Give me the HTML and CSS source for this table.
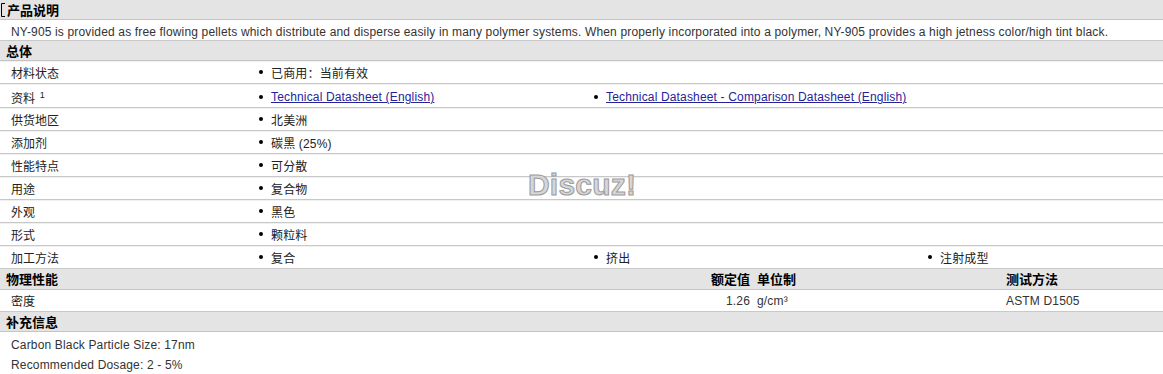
FILE: index.html
```html
<!DOCTYPE html>
<html lang="zh">
<head>
<meta charset="utf-8">
<title>NY-905</title>
<link rel="stylesheet" href="styles.css">
</head>
<body>
<div class="sheet">
  <div class="head head-first"><svg class="cursor" width="6" height="16" viewBox="0 0 6 16"><path d="M5 1.5H1.5V14.5H5" fill="none" stroke="#000" stroke-width="1"/></svg>产品说明</div>
  <div class="desc">NY-905 is provided as free flowing pellets which distribute and disperse easily in many polymer systems. When properly incorporated into a polymer, NY-905 provides a high jetness color/high tint black.</div>

  <div class="head">总体</div>
  <div class="row"><div class="label">材料状态</div><div class="val"><span class="dot"></span>已商用：当前有效</div></div>
  <div class="row row-low"><div class="label">资料 <sup class="sup">1</sup></div><div class="val"><span class="dot"></span><a href="#" class="link">Technical Datasheet (English)</a></div><div class="val"><span class="dot"></span><a href="#" class="link">Technical Datasheet - Comparison Datasheet (English)</a></div></div>
  <div class="row"><div class="label">供货地区</div><div class="val"><span class="dot"></span>北美洲</div></div>
  <div class="row"><div class="label">添加剂</div><div class="val"><span class="dot"></span>碳黑 (25%)</div></div>
  <div class="row"><div class="label">性能特点</div><div class="val"><span class="dot"></span>可分散</div></div>
  <div class="row"><div class="label">用途</div><div class="val"><span class="dot"></span>复合物</div></div>
  <div class="row"><div class="label">外观</div><div class="val"><span class="dot"></span>黑色</div></div>
  <div class="row"><div class="label">形式</div><div class="val"><span class="dot"></span>颗粒料</div></div>
  <div class="row row-last"><div class="label">加工方法</div><div class="val"><span class="dot"></span>复合</div><div class="val"><span class="dot"></span>挤出</div><div class="val"><span class="dot"></span>注射成型</div></div>

  <div class="head phys"><div>物理性能</div><div class="num">额定值</div><div class="unit">单位制</div><div class="test">测试方法</div></div>
  <div class="prow"><div class="label">密度</div><div class="num">1.26</div><div class="unit">g/cm³</div><div class="test">ASTM D1505</div></div>

  <div class="head">补充信息</div>
  <div class="notes">
    <p>Carbon Black Particle Size: 17nm</p>
    <p>Recommended Dosage: 2 - 5%</p>
  </div>

  <div class="watermark">Discuz!</div>
</div>
</body>
</html>
```

FILE: styles.css
```css
html, body {
  margin: 0;
  padding: 0;
  background: #fff;
}
body {
  font-family: "Liberation Sans", "Noto Sans CJK SC", sans-serif;
  font-size: 12px;
  color: #222;
  letter-spacing: 0.16px;
}
.sheet {
  position: relative;
  width: 1163px;
  height: 374px;
  overflow: hidden;
}
.head {
  height: 19px;
  line-height: 19px;
  background: #e4e4e4;
  border-top: 1px solid #c9c9c9;
  border-bottom: 1px solid #c4c4c4;
  font-family: "Noto Sans CJK SC", sans-serif;
  font-weight: 700;
  font-size: 13px;
  color: #000;
  padding-left: 6px;
  display: flex;
  align-items: center;
  letter-spacing: 0;
}
.head-first {
  border-top: 0;
  height: 19px;
  padding-left: 0;
}
.cursor {
  display: block;
  margin-right: 1px;
}
.desc {
  height: 20px;
  line-height: 25px;
  overflow: hidden;
  padding-left: 11px;
  color: #333;
  white-space: nowrap;
}
.row {
  display: grid;
  grid-template-columns: 250px 335px 334px 1fr;
  height: 22px;
  align-items: center;
  border-bottom: 1px solid #c8c8c8;
  box-shadow: inset 0 1px 0 #f0f0f0;
}
.row-low {
  padding-top: 3px;
  height: 20px;
}
.row-last {
  border-bottom: 0;
}
.label {
  padding-left: 11px;
  font-family: "Noto Sans CJK SC", sans-serif;
  color: #222;
  letter-spacing: 0;
}
.sup {
  font-size: 9px;
  vertical-align: 5px;
  line-height: 0;
  font-family: "Liberation Sans", sans-serif;
  margin-left: 2px;
}
.val {
  display: flex;
  align-items: center;
  padding-left: 9px;
  color: #222;
  white-space: nowrap;
}
.dot {
  width: 4px;
  height: 4px;
  border-radius: 50%;
  background: #000;
  margin-right: 8px;
  flex: none;
}
.link {
  color: #25239a;
  text-decoration: underline;
}
.phys {
  display: grid;
  grid-template-columns: 634px 110px 256px 1fr;
  align-items: center;
  padding-left: 6px;
  height: 20px;
  line-height: 20px;
}
.phys .num {
  text-align: right;
}
.prow {
  display: grid;
  grid-template-columns: 640px 110px 256px 1fr;
  height: 21px;
  align-items: center;
  color: #333;
}
.num {
  text-align: right;
}
.unit {
  padding-left: 7px;
}
.notes {
  padding-left: 11px;
  padding-top: 3px;
  color: #333;
}
.notes p {
  margin: 0;
  height: 20px;
  line-height: 20px;
}
.watermark {
  position: absolute;
  left: 528px;
  top: 168px;
  font-family: "Liberation Sans", sans-serif;
  font-weight: 700;
  font-size: 30px;
  color: #d6d6d6;
  -webkit-text-stroke: 1px #9a9a9a;
  line-height: 34px;
  letter-spacing: 0.2px;
}
```
